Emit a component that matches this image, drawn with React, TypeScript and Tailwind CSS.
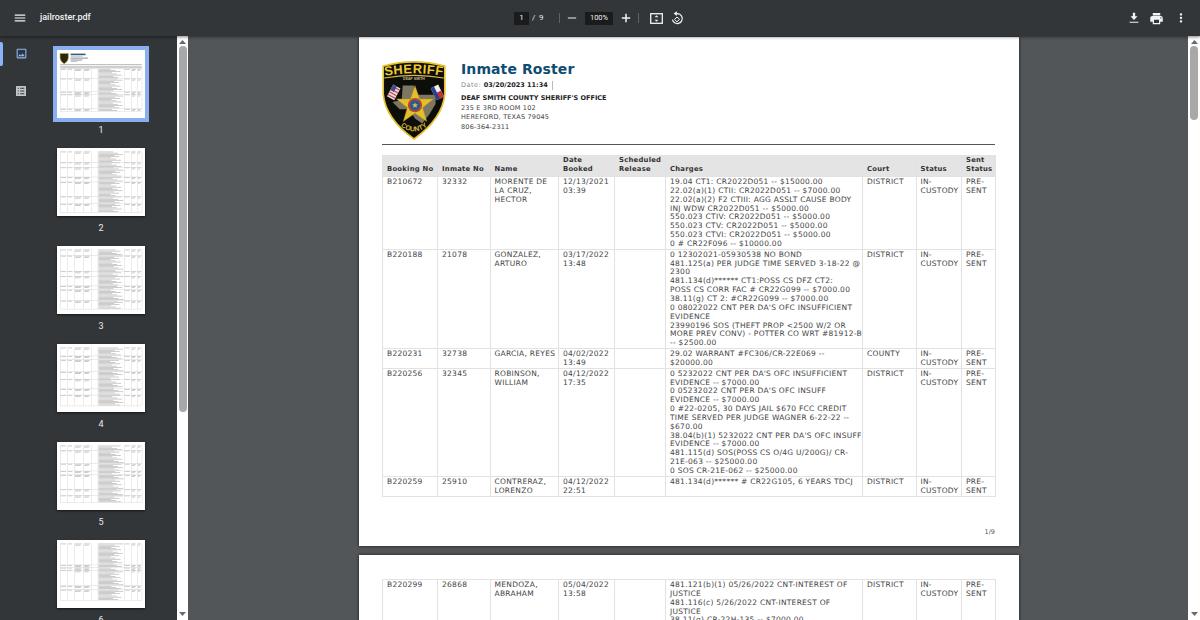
import React from 'react'

// ─────────────────────────────────────────────────────────────────────────────
// Data
// ─────────────────────────────────────────────────────────────────────────────
type Row = {
  booking: string
  inmate: string
  name: string[]
  date: string[]
  charges: string[]
  court: string
}

const firstPageRows: Row[] = [
  {
    booking: 'B210672',
    inmate: '32332',
    name: ['MORENTE DE', 'LA CRUZ,', 'HECTOR'],
    date: ['12/13/2021', '03:39'],
    charges: [
      '19.04 CT1: CR2022D051 -- $15000.00',
      '22.02(a)(1) CTII: CR2022D051 -- $7000.00',
      '22.02(a)(2) F2 CTIII: AGG ASSLT CAUSE BODY',
      'INJ WDW CR2022D051 -- $5000.00',
      '550.023 CTIV: CR2022D051 -- $5000.00',
      '550.023 CTV: CR2022D051 -- $5000.00',
      '550.023 CTVI: CR2022D051 -- $5000.00',
      '0 # CR22F096 -- $10000.00',
    ],
    court: 'DISTRICT',
  },
  {
    booking: 'B220188',
    inmate: '21078',
    name: ['GONZALEZ,', 'ARTURO'],
    date: ['03/17/2022', '13:48'],
    charges: [
      '0 12302021-05930538 NO BOND',
      '481.125(a) PER JUDGE TIME SERVED 3-18-22 @',
      '2300',
      '481.134(d)****** CT1:POSS CS DFZ CT2:',
      'POSS CS CORR FAC # CR22G099 -- $7000.00',
      '38.11(g) CT 2: #CR22G099 -- $7000.00',
      "0 08022022 CNT PER DA'S OFC INSUFFICIENT",
      'EVIDENCE',
      '23990196 SOS (THEFT PROP <2500 W/2 OR',
      'MORE PREV CONV) - POTTER CO WRT #81912-B',
      '-- $2500.00',
    ],
    court: 'DISTRICT',
  },
  {
    booking: 'B220231',
    inmate: '32738',
    name: ['GARCIA, REYES'],
    date: ['04/02/2022', '13:49'],
    charges: ['29.02 WARRANT #FC306/CR-22E069 --', '$20000.00'],
    court: 'COUNTY',
  },
  {
    booking: 'B220256',
    inmate: '32345',
    name: ['ROBINSON,', 'WILLIAM'],
    date: ['04/12/2022', '17:35'],
    charges: [
      "0 5232022 CNT PER DA'S OFC INSUFFICIENT",
      'EVIDENCE -- $7000.00',
      "0 05232022 CNT PER DA'S OFC INSUFF",
      'EVIDENCE -- $7000.00',
      '0 #22-0205, 30 DAYS JAIL $670 FCC CREDIT',
      'TIME SERVED PER JUDGE WAGNER 6-22-22 --',
      '$670.00',
      "38.04(b)(1) 5232022 CNT PER DA'S OFC INSUFF",
      'EVIDENCE -- $7000.00',
      '481.115(d) SOS(POSS CS O/4G U/200G)/ CR-',
      '21E-063 -- $25000.00',
      '0 SOS CR-21E-062 -- $25000.00',
    ],
    court: 'DISTRICT',
  },
  {
    booking: 'B220259',
    inmate: '25910',
    name: ['CONTRERAZ,', 'LORENZO'],
    date: ['04/12/2022', '22:51'],
    charges: ['481.134(d)****** # CR22G105, 6 YEARS TDCJ'],
    court: 'DISTRICT',
  },
]

const secondPageRows: Row[] = [
  {
    booking: 'B220299',
    inmate: '26868',
    name: ['MENDOZA,', 'ABRAHAM'],
    date: ['05/04/2022', '13:58'],
    charges: [
      '481.121(b)(1) 05/26/2022 CNT-INTEREST OF',
      'JUSTICE',
      '481.116(c) 5/26/2022 CNT-INTEREST OF',
      'JUSTICE',
      '38.11(g) CR-22H-135 -- $7000.00',
    ],
    court: 'DISTRICT',
  },
]

// line counts per row, used for the tiny page previews
const thumbPages: { top: number; rows: number[] }[] = [
  { top: 139, rows: [8, 11, 2, 12, 2] },
  { top: 24, rows: [9, 4, 8, 4, 12, 6, 7] },
  { top: 24, rows: [5, 13, 4, 8, 3, 9, 7] },
  { top: 24, rows: [7, 3, 10, 6, 8, 5, 9] },
  { top: 24, rows: [4, 11, 6, 3, 12, 5, 6] },
  { top: 24, rows: [18, 2, 2, 13, 3, 9] },
]

const thumbCols = [23, 78, 130, 199, 255, 306, 503, 556, 602, 636]

// ─────────────────────────────────────────────────────────────────────────────
// Small drawings
// ─────────────────────────────────────────────────────────────────────────────
const Icon = ({ d, size, className }: { d: string; size: number; className?: string }) => (
  <svg width={size} height={size} viewBox="0 0 24 24" className={className} fill="currentColor">
    <path d={d} />
  </svg>
)

const Arrow = ({ up }: { up?: boolean }) => (
  <svg width="7" height="4" viewBox="0 0 7 4" className="text-[#6a6a6a]" fill="currentColor">
    <path d={up ? 'M3.5 0L7 4H0z' : 'M3.5 4L7 0H0z'} />
  </svg>
)

const SheriffBadge = () => (
  <svg width="64" height="79" viewBox="0 0 62 77" className="shrink-0">
    <path
      d="M1 5 Q16 0.800 31 0.800 Q46 0.800 61 5 L61 32 Q59 56 31 76 Q3 56 1 32 Z"
      fill="#0d0d0a"
      stroke="#e6c22c"
      strokeWidth="1.6"
    />
    <path d="M2 16.500 Q31 11.500 60 16.500" fill="none" stroke="#d8bb46" strokeWidth="1" />
    <path id="badgeTop" d="M4 14.200 Q31 9.800 58 14.200" fill="none" />
    <text fontFamily="Liberation Sans" fontWeight="700" fontSize="12.500" fill="#ecc935">
      <textPath href="#badgeTop" startOffset="50%" textAnchor="middle" letterSpacing="0.500">
        SHERIFF
      </textPath>
    </text>
    <text x="31" y="18.800" textAnchor="middle" fontFamily="Liberation Sans" fontWeight="700" fontSize="3.500" fill="#cbb98a">
      DEAF SMITH
    </text>
    <path d="M20 24 H31 V33 H52 V42 L46 52 L39 61 L32 56 L26 47 L17 47 L10 40 L19 38 Z" fill="#7d7662" />
    <g transform="rotate(28 11 31)">
      <rect x="7" y="24" width="8" height="13" fill="#eadada" />
      <path d="M7 26h8M7 29h8M7 32h8M7 35h8" stroke="#c7444c" strokeWidth="1.100" />
      <rect x="7" y="24" width="4" height="6" fill="#3f4f8e" />
    </g>
    <g transform="rotate(-26 54 31)">
      <rect x="50" y="24" width="8" height="13" fill="#f1f1f1" />
      <rect x="50" y="30.500" width="8" height="6.500" fill="#c4303a" />
      <rect x="50" y="24" width="3.500" height="13" fill="#27408f" />
    </g>
    <path
      d="M32 24 L36.500 37 L50 37 L39.500 45.500 L43.500 59 L32 51 L20.500 59 L24.500 45.500 L14 37 L27.500 37 Z"
      fill="#e3bf2c"
      stroke="#a88a1c"
      strokeWidth="0.400"
    />
    <circle cx="32" cy="43" r="7" fill="#b84a2a" />
    <circle cx="32" cy="43" r="5" fill="#27588f" />
    <path d="M32 40.200l.8 1.900 2.100.1-1.600 1.400.5 2-1.800-1.100-1.800 1.100.5-2-1.600-1.400 2.100-.1z" fill="#d8b84a" />
    <path id="badgeBottom" d="M15 61 Q31 76 47 61" fill="none" />
    <text fontFamily="Liberation Sans" fontWeight="700" fontSize="6.800" fill="#d9b93a">
      <textPath href="#badgeBottom" startOffset="50%" textAnchor="middle">
        COUNTY
      </textPath>
    </text>
  </svg>
)

const PageThumb = ({ page, index }: { page: (typeof thumbPages)[number]; index: number }) => {
  let y = page.top
  const rowEnds: number[] = []
  const bars: React.ReactNode[] = []
  page.rows.forEach((count, r) => {
    for (let i = 0; i < count; i++) {
      const w = 90 + ((i * 37 + r * 53 + index * 19) % 100)
      bars.push(<rect key={`c${r}-${i}`} x={311} y={y + 3 + i * 8.85} width={w} height={5} fill="#b4b4b4" />)
    }
    const cells = [
      [28, 40],
      [83, 30],
      [135, 50],
      [204, 42],
      [508, 38],
      [561, 30],
      [607, 22],
    ]
    cells.forEach(([x, w], c) => {
      bars.push(<rect key={`k${r}-${c}`} x={x} y={y + 3} width={w} height={5} fill="#b4b4b4" />)
      if (c === 2 || c === 3 || c > 4) {
        bars.push(<rect key={`j${r}-${c}`} x={x} y={y + 12} width={w - 8} height={5} fill="#b4b4b4" />)
      }
    })
    y += count * 8.85 + 2
    rowEnds.push(y)
  })

  return (
    <svg width="88" height="68" viewBox="0 0 660 510" className="block bg-white">
      {index === 0 && (
        <>
          <path d="M23 26 H85 V60 Q84 85 54 103 Q24 85 23 60 Z" fill="#2a2612" stroke="#c9a92c" strokeWidth="4" />
          <rect x="102" y="27" width="112" height="12" fill="#2f5f80" />
          <rect x="102" y="44" width="90" height="5" fill="#aaa" />
          <rect x="102" y="58" width="130" height="5" fill="#555" />
          <rect x="102" y="67" width="90" height="5" fill="#aaa" />
          <rect x="102" y="76" width="85" height="5" fill="#aaa" />
          <rect x="102" y="85" width="50" height="5" fill="#aaa" />
          <rect x="23" y="108" width="613" height="3" fill="#666" />
          <rect x="23" y="118" width="613" height="21" fill="#d0d0d0" />
        </>
      )}
      {bars}
      {thumbCols.map(x => (
        <rect key={x} x={x} y={page.top} width="3" height={y - page.top} fill="#cfcfcf" />
      ))}
      {rowEnds.map((ry, i) => (
        <rect key={i} x="23" y={ry} width="613" height="3" fill="#cfcfcf" />
      ))}
    </svg>
  )
}

// ─────────────────────────────────────────────────────────────────────────────
// Roster table
// ─────────────────────────────────────────────────────────────────────────────
const Lines = ({ items }: { items: string[] }) => (
  <>
    {items.map((line, i) => (
      <div key={i} className="whitespace-nowrap">
        {line}
      </div>
    ))}
  </>
)

const cell = 'border border-[#e2e2e2] pl-[4px] pr-0 pt-[1px] pb-0 align-top'
const head =
  'border border-[#e2e2e2] pl-[4px] pb-[2px] align-bottom text-left text-[6.8px] font-bold tracking-[0.26px] whitespace-nowrap'

const RosterTable = ({ rows, header }: { rows: Row[]; header?: boolean }) => (
  <table className="w-[613px] table-fixed border-collapse font-['DejaVu_Sans',sans-serif] text-[7.5px] leading-[8.85px] tracking-[0.27px] text-[#444]">
    <colgroup>
      <col className="w-[55px]" />
      <col className="w-[52.5px]" />
      <col className="w-[68.5px]" />
      <col className="w-[56px]" />
      <col className="w-[51px]" />
      <col className="w-[197px]" />
      <col className="w-[53.5px]" />
      <col className="w-[45.5px]" />
      <col className="w-[34px]" />
    </colgroup>
    {header && (
      <thead>
        <tr className="h-[21px] bg-[#e4e4e4] text-[#333]">
          <th className={head}>Booking No</th>
          <th className={head}>Inmate No</th>
          <th className={head}>Name</th>
          <th className={head}>
            Date
            <br />
            Booked
          </th>
          <th className={head}>
            Scheduled
            <br />
            Release
          </th>
          <th className={head}>Charges</th>
          <th className={head}>Court</th>
          <th className={head}>Status</th>
          <th className={head}>
            Sent
            <br />
            Status
          </th>
        </tr>
      </thead>
    )}
    <tbody>
      {rows.map(row => (
        <tr key={row.booking}>
          <td className={cell}>{row.booking}</td>
          <td className={cell}>{row.inmate}</td>
          <td className={cell}>
            <Lines items={row.name} />
          </td>
          <td className={cell}>
            <Lines items={row.date} />
          </td>
          <td className={cell}></td>
          <td className={cell}>
            <Lines items={row.charges} />
          </td>
          <td className={cell}>{row.court}</td>
          <td className={cell}>
            <Lines items={['IN-', 'CUSTODY']} />
          </td>
          <td className={cell}>
            <Lines items={['PRE-', 'SENT']} />
          </td>
        </tr>
      ))}
    </tbody>
  </table>
)

// ─────────────────────────────────────────────────────────────────────────────
// Toolbar
// ─────────────────────────────────────────────────────────────────────────────
const Toolbar = () => (
  <div className="relative z-10 flex h-[36px] shrink-0 items-center bg-[#323639] font-['Roboto',sans-serif] text-[#f1f3f4] shadow-[0_1px_3px_rgba(0,0,0,0.5)]">
    <div className="flex w-[514px] items-center">
      <Icon size={14} className="ml-[13px]" d="M3 18h18v-2H3v2zm0-5h18v-2H3v2zm0-7v2h18V6H3z" />
      <span className="ml-[13px] text-[9px] font-medium">jailroster.pdf</span>
    </div>
    <div className="flex items-center text-[8px]">
      <span className="flex h-[13px] w-[15px] items-center justify-center bg-[#191b1c]">1</span>
      <span className="ml-[3px] w-[14px] tracking-[0.8px] text-[#e8eaed]">/ 9</span>
      <span className="ml-[13px] h-[10px] w-px bg-[#5f6368]" />
      <Icon size={10} className="ml-[7px]" d="M2 13.200h20v-2.400H2z" />
      <span className="ml-[8px] flex h-[13px] w-[28px] items-center justify-center bg-[#191b1c] text-[7.5px]">100%</span>
      <Icon size={10} className="ml-[8px]" d="M22 13.800h-8.200V22h-3.600v-8.200H2v-3.600h8.200V2h3.600v8.200H22z" />
      <span className="ml-[7px] h-[10px] w-px bg-[#5f6368]" />
      <svg width="13" height="11" viewBox="0 0 13 11" fill="none" className="ml-[11px]">
        <rect x="0.700" y="0.700" width="11.600" height="9.600" stroke="currentColor" strokeWidth="1.300" />
        <path d="M6.500 2.200L8.400 4.200H4.600zM6.500 8.800L8.400 6.800H4.600z" fill="currentColor" />
      </svg>
      <svg width="13" height="14" viewBox="0 0 13 14" fill="none" className="ml-[8px]">
        <path d="M5 2.700a5 5 0 1 1-3.600 6" stroke="currentColor" strokeWidth="1.200" />
        <path d="M5.800 0.300v4.600L2.700 2.600z" fill="currentColor" />
        <path d="M6 6l2.600 2.400L6 10.800 3.500 8.400z" stroke="currentColor" strokeWidth="1" />
      </svg>
    </div>
    <div className="flex flex-1 items-center justify-end pr-[12px]">
      <Icon size={14} d="M18 9h-4V3h-4v6H6l6 6.500L18 9zM4.500 18.500V20h15v-1.500z" />
      <Icon
        size={15}
        className="ml-[8px]"
        d="M19 8H5c-1.660 0-3 1.340-3 3v6h4v4h12v-4h4v-6c0-1.660-1.340-3-3-3zm-3 11H8v-5h8v5zm3-7c-.55 0-1-.45-1-1s.45-1 1-1 1 .45 1 1-.45 1-1 1zm-1-9H6v4h12V3z"
      />
      <Icon
        size={14}
        className="ml-[10px]"
        d="M12 8c1.100 0 2-.9 2-2s-.9-2-2-2-2 .9-2 2 .9 2 2 2zm0 2c-1.100 0-2 .9-2 2s.9 2 2 2 2-.9 2-2-.9-2-2-2zm0 6c-1.100 0-2 .9-2 2s.9 2 2 2 2-.9 2-2-.9-2-2-2z"
      />
    </div>
  </div>
)

// ─────────────────────────────────────────────────────────────────────────────
// Sidebar and scrollbars
// ─────────────────────────────────────────────────────────────────────────────
const Scrollbar = ({ thumb, width }: { thumb: string; width: string }) => (
  <div className={`flex shrink-0 flex-col items-center bg-white pt-[4px] ${width}`}>
    <Arrow up />
    <div className={`mt-[2px] w-[8px] rounded-[4px] bg-[#a8a8a8] ${thumb}`} />
    <div className="flex-1" />
    <div className="pb-[4px]">
      <Arrow />
    </div>
  </div>
)

const Sidebar = () => (
  <div className="flex w-[177px] shrink-0 overflow-hidden bg-[#323639]">
    <div className="relative flex w-[42px] shrink-0 flex-col items-center gap-[26px] pt-[11px]">
      <div className="absolute left-0 top-[6px] h-[24px] w-[3px] rounded-r-[2px] bg-[#8ab4f8]" />
      <Icon
        size={13}
        className="text-[#8ab4f8]"
        d="M19 5v14H5V5h14m0-2H5c-1.100 0-2 .9-2 2v14c0 1.100.9 2 2 2h14c1.100 0 2-.9 2-2V5c0-1.100-.9-2-2-2zm-4.860 8.860l-3 3.870L9 13.140 6 17h12l-3.860-5.140z"
      />
      <svg width="10" height="10" viewBox="0 0 12 12" className="text-[#c4c7c9]" fill="currentColor">
        <path
          fillRule="evenodd"
          d="M1 0h10a1 1 0 0 1 1 1v10a1 1 0 0 1-1 1H1a1 1 0 0 1-1-1V1a1 1 0 0 1 1-1zM2 2v1.400h1.400V2zM5 2v1.400h5V2zM2 5.300v1.400h1.400V5.300zM5 5.300v1.400h5V5.300zM2 8.600V10h1.400V8.600zM5 8.600V10h5V8.600z"
        />
      </svg>
    </div>
    <div className="flex flex-1 flex-col items-center gap-[30px] pr-[17px] pt-[14px]">
      {thumbPages.map((page, i) => (
        <div
          key={i}
          className={`relative h-[68px] w-[88px] shrink-0 shadow-[0_1px_2px_rgba(0,0,0,0.6)] ${
            i === 0 ? 'outline-[4px] outline-solid outline-[#8aaef0]' : ''
          }`}
        >
          <PageThumb page={page} index={i} />
          <span className="absolute left-0 top-[74px] w-full text-center font-['Roboto',sans-serif] text-[9px] leading-[12px] text-[#e8eaed]">
            {i + 1}
          </span>
        </div>
      ))}
    </div>
  </div>
)

// ─────────────────────────────────────────────────────────────────────────────
// App
// ─────────────────────────────────────────────────────────────────────────────
export default function App() {
  return (
    <div className="flex h-[620px] w-[1200px] flex-col overflow-hidden bg-[#525659]">
      <Toolbar />
      <div className="flex min-h-0 flex-1">
        <Sidebar />
        <Scrollbar width="w-[11px]" thumb="h-[366px]" />
        <div className="flex min-w-0 flex-1 flex-col items-center gap-[9px] overflow-hidden pl-[2px] pt-px">
          <div className="flex h-[509px] w-[660px] shrink-0 flex-col bg-white pl-[23px] pr-[24px] pt-[24px] shadow-[0_0_3px_rgba(0,0,0,0.7)]">
            <div className="flex h-[84px] gap-[15px] border-b border-[#555] font-['DejaVu_Sans',sans-serif]">
              <SheriffBadge />
              <div className="flex flex-col">
                <h1 className="text-[14px] font-bold leading-[17px] tracking-[0.1px] text-[#0f4c72]">Inmate Roster</h1>
                <div className="mt-[2px] flex items-center text-[6.5px] leading-[10px] text-[#888]">
                  <span className="tracking-[0.5px]">Date:&nbsp;</span>
                  <b className="text-[#222]">03/20/2023 11:34</b>
                  <span className="ml-[4px] h-[9px] w-px bg-[#bbb]" />
                </div>
                <div className="mt-[4px] text-[6.5px] font-bold leading-[9.6px] text-[#222]">
                  DEAF SMITH COUNTY SHERIFF'S OFFICE
                </div>
                <div className="text-[6.5px] leading-[9.6px] tracking-[0.2px] text-[#444]">
                  235 E 3RD ROOM 102
                  <br />
                  HEREFORD, TEXAS 79045
                  <br />
                  806-364-2311
                </div>
              </div>
            </div>
            <div className="mt-[10px]">
              <RosterTable rows={firstPageRows} header />
            </div>
            <div className="mt-[31px] text-right font-['DejaVu_Sans',sans-serif] text-[6.5px] text-[#555]">1/9</div>
          </div>
          <div className="h-[300px] w-[660px] shrink-0 bg-white pl-[23px] pr-[24px] pt-[24px] shadow-[0_0_3px_rgba(0,0,0,0.7)]">
            <RosterTable rows={secondPageRows} />
          </div>
        </div>
        <Scrollbar width="w-[12px]" thumb="h-[74px]" />
      </div>
    </div>
  )
}
